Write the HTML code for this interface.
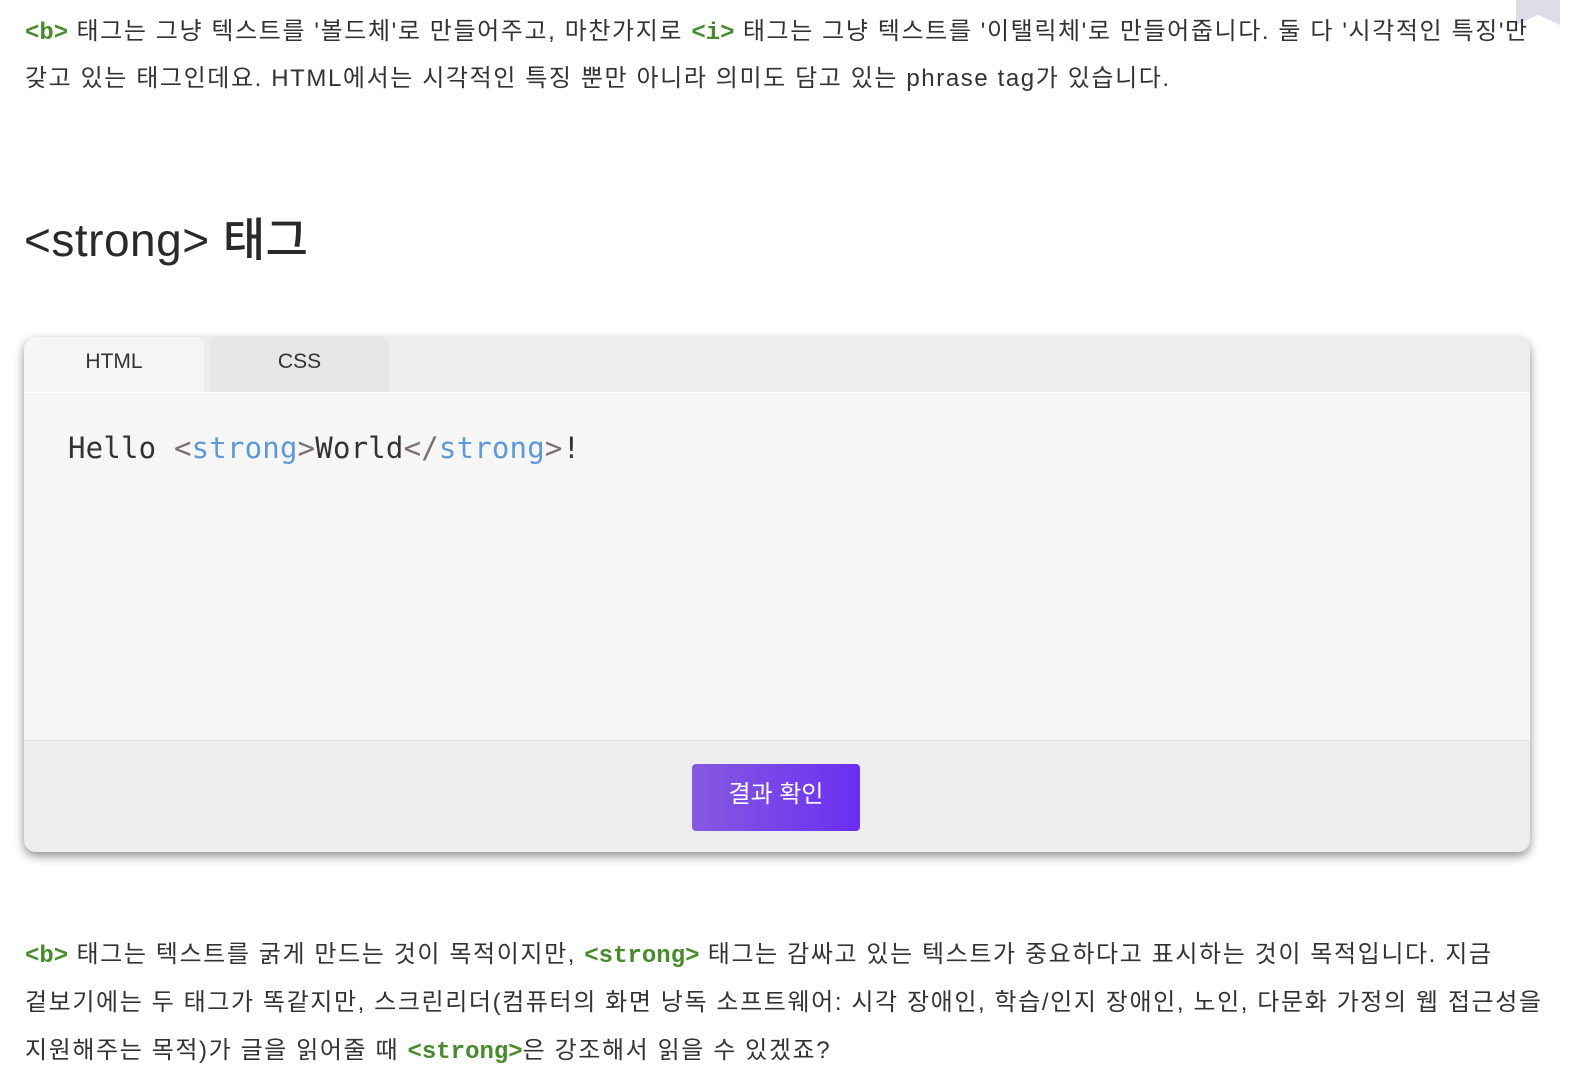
<!DOCTYPE html>
<html><head><meta charset="utf-8"><style>
html,body{margin:0;padding:0;background:#fff;}
body{width:1586px;height:1084px;overflow:hidden;position:relative;font-family:"Liberation Sans","Noto Sans CJK KR",sans-serif;color:#333;}
.p{position:absolute;left:25px;font-size:24px;letter-spacing:1.6px;white-space:nowrap;line-height:48px;}
.g{color:#4a8a2e;font-weight:bold;font-family:"Liberation Mono","DejaVu Sans Mono",monospace;letter-spacing:0;}
h2{position:absolute;left:24px;top:210px;margin:0;font-size:46px;font-weight:500;color:#2a2a2a;letter-spacing:0.5px;line-height:60px;}
.bm{position:absolute;left:1516px;top:0;width:44px;height:25px;background:#dcdde6;clip-path:polygon(0 0,100% 0,100% 100%,50% 60%,0 100%);}
.card{position:absolute;left:24px;top:337px;width:1506px;height:515px;border-radius:12px;background:#ededf0;box-shadow:0 4px 10px rgba(0,0,0,.45);overflow:hidden;}
.tab{position:absolute;top:0;height:55px;line-height:50px;text-align:center;font-size:21px;color:#333;}
.t1{left:0;width:180px;background:#f5f5f5;border-radius:12px 8px 0 0;}
.t2{left:186px;width:179px;background:#e6e6e9;border-radius:8px 8px 0 0;}
.code{position:absolute;left:0;top:55px;width:1506px;height:348px;background:#f6f6f6;border-top:1px solid #fff;}
.code pre{margin:0;position:absolute;left:44px;top:38px;font-family:"DejaVu Sans Mono","Liberation Mono",monospace;font-size:29px;color:#333;letter-spacing:0.2px;}
.tg{color:#7b6f6f}.nm{color:#5e9ad6}
.foot{position:absolute;left:0;top:403px;width:1506px;height:112px;border-top:1px solid #e2e2e6;}
.btn{position:absolute;left:668px;top:23px;width:168px;height:67px;border-radius:4px;background:linear-gradient(90deg,#8659e0,#6a2ff2);color:#fff;font-size:24px;line-height:62px;text-align:center;}
</style></head><body>
<div class="bm"></div>
<div class="p" style="top:8px"><span class="g">&lt;b&gt;</span> 태그는 그냥 텍스트를 '볼드체'로 만들어주고, 마찬가지로 <span class="g">&lt;i&gt;</span> 태그는 그냥 텍스트를 '이탤릭체'로 만들어줍니다. 둘 다 '시각적인 특징'만</div>
<div class="p" style="top:55px">갖고 있는 태그인데요. HTML에서는 시각적인 특징 뿐만 아니라 의미도 담고 있는 phrase tag가 있습니다.</div>
<h2>&lt;strong&gt; 태그</h2>
<div class="card">
<div class="tab t1">HTML</div><div class="tab t2">CSS</div>
<div class="code"><pre>Hello <span class="tg">&lt;</span><span class="nm">strong</span><span class="tg">&gt;</span>World<span class="tg">&lt;/</span><span class="nm">strong</span><span class="tg">&gt;</span>!</pre></div>
<div class="foot"><div class="btn">결과 확인</div></div>
</div>
<div class="p" style="top:931px"><span class="g">&lt;b&gt;</span> 태그는 텍스트를 굵게 만드는 것이 목적이지만, <span class="g">&lt;strong&gt;</span> 태그는 감싸고 있는 텍스트가 중요하다고 표시하는 것이 목적입니다. 지금</div>
<div class="p" style="top:979px">겉보기에는 두 태그가 똑같지만, 스크린리더(컴퓨터의 화면 낭독 소프트웨어: 시각 장애인, 학습/인지 장애인, 노인, 다문화 가정의 웹 접근성을</div>
<div class="p" style="top:1027px">지원해주는 목적)가 글을 읽어줄 때 <span class="g">&lt;strong&gt;</span>은 강조해서 읽을 수 있겠죠?</div>
</body></html>
